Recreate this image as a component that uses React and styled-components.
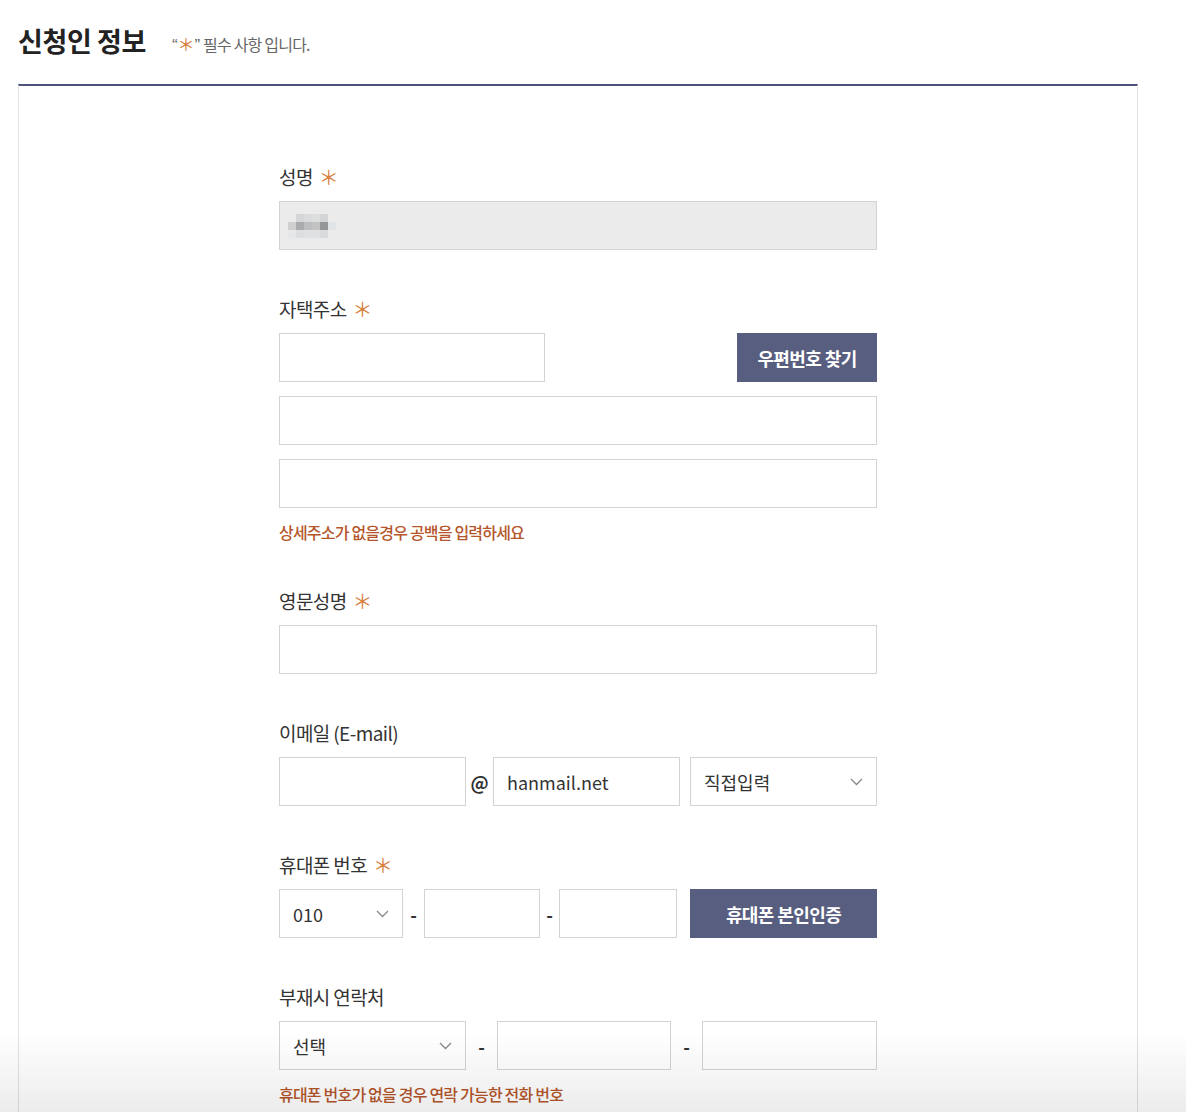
import styled, { createGlobalStyle } from 'styled-components'

const GlobalStyle = createGlobalStyle`
  * { box-sizing: border-box; }
  body {
    margin: 0;
    background: #fff;
    font-family: "Noto Sans CJK KR", "Noto Sans", sans-serif;
    color: #333;
  }
`;

const Page = styled.div`
  padding: 0 48px 0 18px;
`;

const Header = styled.div`
  display: flex;
  align-items: center;
  height: 84px;
  padding-bottom: 4px;
`;

const Title = styled.h2`
  margin: 0;
  font-size: 27px;
  font-weight: 700;
  color: #222;
  letter-spacing: -0.4px;
`;

const Notice = styled.span`
  margin-left: 26px;
  margin-top: 6px;
  font-size: 16px;
  color: #666;
  letter-spacing: -0.8px;
`;

const Quote = styled.span`
  font-family: "Liberation Sans", sans-serif;
  font-size: 17px;
  letter-spacing: 0;
`;

const Star = styled.span`
  color: #d9803e;
  font-size: ${p => p.$size || 20}px;
  margin-left: ${p => p.$gap ?? 6}px;
  letter-spacing: 0;
`;

const Panel = styled.div`
  width: 1120px;
  border: 1px solid #e2e2e2;
  border-top: 2px solid #4e5479;
  border-bottom: none;
  padding: 79px 0 80px;
`;

const Form = styled.div`
  width: 598px;
  margin: 0 auto;
`;

const Field = styled.div`
  margin-bottom: 47px;
`;

const Label = styled.div`
  font-size: 19px;
  line-height: 24px;
  margin-bottom: 12px;
  color: #333;
  letter-spacing: -0.6px;
  display: flex;
  align-items: center;
`;

const Input = styled.div`
  width: ${p => p.$w ? `${p.$w}px` : '100%'};
  height: 49px;
  border: 1px solid #d3d3d3;
  background: ${p => p.$disabled ? '#ebebeb' : '#fff'};
  display: flex;
  align-items: center;
  padding: 0 13px;
  font-size: 18px;
  color: #333;
  flex-shrink: 0;
`;

const Stack = styled.div`
  display: flex;
  flex-direction: column;
  gap: 14px;
`;

const Row = styled.div`
  display: flex;
  align-items: center;
`;

const Sep = styled.span`
  width: ${p => p.$w}px;
  text-align: center;
  font-size: 18px;
  font-weight: 700;
  color: #333;
  flex-shrink: 0;
`;

const Button = styled.div`
  width: ${p => p.$w}px;
  height: 49px;
  margin-left: auto;
  background: #585e80;
  color: #fff;
  font-size: 18px;
  font-weight: 700;
  display: flex;
  align-items: center;
  justify-content: center;
  letter-spacing: -0.6px;
  flex-shrink: 0;
`;

const SelectText = styled.span`
  flex: 1;
`;

const Help = styled.div`
  margin-top: 14px;
  font-size: 16px;
  line-height: 20px;
  font-weight: 500;
  color: #b5562b;
  letter-spacing: -0.8px;
`;

const Blur = styled.div`
  display: grid;
  grid-template-columns: repeat(6, 8px);
  grid-auto-rows: 8px;
  margin-left: -5px;
`;

const Cell = styled.span`
  background: ${p => p.$c};
`;

const Fade = styled.div`
  position: fixed;
  left: 0;
  right: 0;
  bottom: 0;
  height: 80px;
  background: linear-gradient(to bottom, rgba(0,0,0,0), rgba(0,0,0,0.075));
  pointer-events: none;
`;

const blurCells = [
  '#ebebeb', '#d4d6d8', '#dadbdc', '#dcdddd', '#d2d4d6', '#ebebeb',
  '#cfcfd0', '#a9abae', '#bdbec0', '#c2c2c2', '#959699', '#e2e5e8',
  '#e6e7e8', '#dcdee0', '#e0e1e2', '#dfe1e2', '#d9dadc', '#ebebeb',
];

const Chevron = () => (
  <svg width="13" height="8" viewBox="0 0 13 8" fill="none">
    <path d="M1 1l5.5 5.5L12 1" stroke="#888" strokeWidth="1.3" />
  </svg>
);

const Select = ({ w, children }) => (
  <Input $w={w}>
    <SelectText>{children}</SelectText>
    <Chevron />
  </Input>
);

const Req = () => <Star>＊</Star>;

export default function App() {
  return (
    <>
      <GlobalStyle />
      <Page>
        <Header>
          <Title>신청인 정보</Title>
          <Notice>
            <Quote>“</Quote><Star $size={17} $gap={0}>＊</Star><Quote>”</Quote> 필수 사항 입니다.
          </Notice>
        </Header>
        <Panel>
          <Form>
            <Field>
              <Label>성명<Req /></Label>
              <Input $disabled>
                <Blur>
                  {blurCells.map((c, i) => <Cell key={i} $c={c} />)}
                </Blur>
              </Input>
            </Field>

            <Field>
              <Label>자택주소<Req /></Label>
              <Stack>
                <Row>
                  <Input $w={266} />
                  <Button $w={140}>우편번호 찾기</Button>
                </Row>
                <Input />
                <Input />
              </Stack>
              <Help>상세주소가 없을경우 공백을 입력하세요</Help>
            </Field>

            <Field>
              <Label>영문성명<Req /></Label>
              <Input />
            </Field>

            <Field>
              <Label>이메일 (E-mail)</Label>
              <Row>
                <Input $w={187} />
                <Sep $w={27}>@</Sep>
                <Input $w={187}>hanmail.net</Input>
                <Sep $w={10} />
                <Select w={187}>직접입력</Select>
              </Row>
            </Field>

            <Field>
              <Label>휴대폰 번호<Req /></Label>
              <Row>
                <Select w={124}>010</Select>
                <Sep $w={21}>-</Sep>
                <Input $w={116} />
                <Sep $w={19}>-</Sep>
                <Input $w={118} />
                <Button $w={187}>휴대폰 본인인증</Button>
              </Row>
            </Field>

            <Field>
              <Label>부재시 연락처</Label>
              <Row>
                <Select w={187}>선택</Select>
                <Sep $w={31}>-</Sep>
                <Input $w={174} />
                <Sep $w={31}>-</Sep>
                <Input $w={175} />
              </Row>
              <Help>휴대폰 번호가 없을 경우 연락 가능한 전화 번호</Help>
            </Field>
          </Form>
        </Panel>
      </Page>
      <Fade />
    </>
  )
}
